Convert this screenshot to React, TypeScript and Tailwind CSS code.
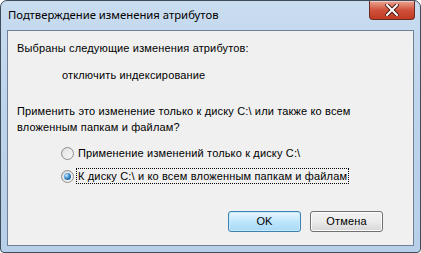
import { useState } from "react";

function Radio({ checked }: { checked: boolean }) {
  return (
    <span className="relative flex h-[13px] w-[13px] shrink-0 items-center justify-center rounded-full border border-[#8e8f8f] bg-gradient-to-br from-[#d4d4d4] to-[#fbfbfb]">
      <span className="h-[9px] w-[9px] rounded-full bg-gradient-to-br from-[#e4e4e4] to-[#f6f6f6]" />
      {checked && (
        <span className="absolute h-[7px] w-[7px] rounded-full bg-[radial-gradient(circle_at_35%_35%,#bfe6ff,#2a7fbf_55%,#0d3f6e)]" />
      )}
    </span>
  );
}

export default function App() {
  const [choice, setChoice] = useState(1);

  return (
    <div
      className="flex h-[253px] w-[421px] flex-col rounded-t-[7px] rounded-b-[4px] border border-[#3f4c5b] bg-gradient-to-b from-[#c9dcf0] via-[#bcd3ea] to-[#b7cfe8] text-[11px] tracking-[0.15px] text-black"
      style={{ fontFamily: '"Liberation Sans", Arial, sans-serif' }}
    >
      <div className="flex h-[29px] shrink-0 items-start justify-between">
        <span
          className="pt-[6px] pl-[7px] text-[11.3px] tracking-normal text-black"
          style={{ fontFamily: '"Noto Sans", sans-serif' }}
        >
          Подтверждение изменения атрибутов
        </span>
        <button className="mr-[5px] flex h-[19px] w-[46px] items-center justify-center rounded-b-[4px] border border-t-0 border-[#6b2b22] bg-gradient-to-b from-[#e8a493] via-[#d0513a] to-[#c23a22] shadow-[inset_0_1px_0_rgba(255,255,255,0.45)]">
          <svg width="14" height="12" viewBox="0 0 14 12">
            <path
              d="M2 1 L12 11 M12 1 L2 11"
              stroke="#4a1a14"
              strokeWidth="4"
              strokeLinecap="square"
            />
            <path
              d="M2 1 L12 11 M12 1 L2 11"
              stroke="#ffffff"
              strokeWidth="2"
              strokeLinecap="square"
            />
          </svg>
        </button>
      </div>

      <div className="mx-[6px] mb-[6px] flex flex-1 flex-col border border-[#6e8196] bg-[#f0f0f0] pl-[9px]">
        <p className="mt-[9px] leading-[16px]">Выбраны следующие изменения атрибутов:</p>
        <p className="mt-[11px] pl-[45px] leading-[16px]">отключить индексирование</p>
        <p className="mt-[20px] leading-[16px]">
          Применить это изменение только к диску C:\ или также ко всем
          <br />
          вложенным папкам и файлам?
        </p>

        <div className="mt-[10px] flex flex-col gap-[7px] pl-[44px]">
          <label
            className="flex h-[16px] items-center gap-[2px]"
            onClick={() => setChoice(0)}
          >
            <Radio checked={choice === 0} />
            <span className="border border-transparent px-[1px] leading-[14px]">
              Применение изменений только к диску C:\
            </span>
          </label>
          <label
            className="flex h-[16px] items-center gap-[2px]"
            onClick={() => setChoice(1)}
          >
            <Radio checked={choice === 1} />
            <span className="border border-dotted border-black px-[1px] leading-[14px]">
              К диску C:\ и ко всем вложенным папкам и файлам
            </span>
          </label>
        </div>

        <div className="mt-[27px] flex justify-end gap-[9px] pr-[30px]">
          <button className="h-[21px] w-[73px] rounded-[3px] border border-[#3c7fb1] bg-gradient-to-b from-[#eaf6fd] via-[#bee6fd] to-[#a7d9f5] shadow-[inset_0_0_0_1px_#c7ecfd]">
            OK
          </button>
          <button className="h-[21px] w-[73px] rounded-[3px] border border-[#707070] bg-gradient-to-b from-[#f2f2f2] via-[#ebebeb] to-[#d6d6d6] shadow-[inset_0_0_0_1px_#fcfcfc]">
            Отмена
          </button>
        </div>
      </div>
    </div>
  );
}
